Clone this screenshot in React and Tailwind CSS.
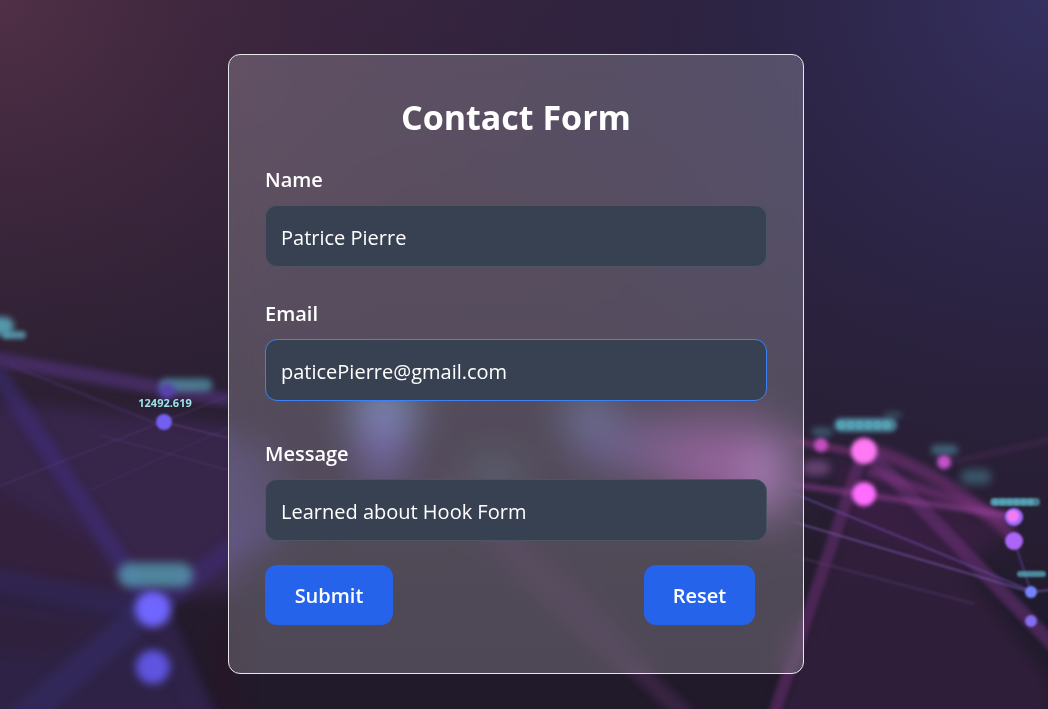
import { useState } from "react";

const beams = [
  { d: "M-10 358 L230 400", stroke: "#4c3070", width: 14, opacity: 0.75, blur: "url(#soft3)" },
  { d: "M-5 370 L150 605", stroke: "#41308a", width: 18, opacity: 0.45, blur: "url(#soft4)" },
  { d: "M-10 580 L150 608", stroke: "#33295e", width: 24, opacity: 0.6, blur: "url(#soft4)" },
  { d: "M150 608 L20 720", stroke: "#352c66", width: 28, opacity: 0.6, blur: "url(#soft4)" },
  { d: "M150 612 L275 515", stroke: "#43308a", width: 20, opacity: 0.4, blur: "url(#soft4)" },
  { d: "M158 615 L205 720", stroke: "#342552", width: 26, opacity: 0.7, blur: "url(#soft4)" },
  { d: "M10 365 L160 425", stroke: "#553377", width: 4, opacity: 0.3, blur: "url(#soft1)" },
  { d: "M-5 488 L228 396", stroke: "#6b4588", width: 1, opacity: 0.5, blur: "url(#soft1)" },
  { d: "M90 490 L228 428", stroke: "#5d3d7c", width: 1, opacity: 0.5, blur: "url(#soft1)" },
  { d: "M100 435 L228 470", stroke: "#67457e", width: 1, opacity: 0.5, blur: "url(#soft1)" },
  { d: "M164 422 L228 438", stroke: "#76508a", width: 1, opacity: 0.7, blur: "url(#soft1)" },
  { d: "M862 455 L772 720", stroke: "#683072", width: 12, opacity: 0.55, blur: "url(#soft2)" },
  { d: "M872 456 L1058 650", stroke: "#6c3278", width: 14, opacity: 0.55, blur: "url(#soft2)" },
  { d: "M868 449 Q940 470 1012 535", stroke: "#7e347f", width: 13, opacity: 0.55, blur: "url(#soft3)" },
  { d: "M868 470 L1010 520", stroke: "#8b388d", width: 10, opacity: 0.5, blur: "url(#soft3)" },
  { d: "M790 440 L864 454", stroke: "#823579", width: 8, opacity: 0.55, blur: "url(#soft2)" },
  { d: "M790 484 L1014 516", stroke: "#9b429e", width: 6, opacity: 0.5, blur: "url(#soft2)" },
  { d: "M790 492 L920 545 L1031 591", stroke: "#6d4aa5", width: 2, opacity: 0.6, blur: "url(#soft1)" },
  { d: "M790 521 L1031 592 L1058 589", stroke: "#7656a6", width: 2, opacity: 0.65, blur: "url(#soft1)" },
  { d: "M1014 540 L1031 592", stroke: "#5649a0", width: 2, opacity: 0.6, blur: "url(#soft1)" },
  { d: "M790 555 L975 604", stroke: "#593b70", width: 3, opacity: 0.35, blur: "url(#soft1)" },
  { d: "M940 465 L1058 438", stroke: "#603163", width: 7, opacity: 0.25, blur: "url(#soft2)" },
  { d: "M440 480 L690 720", stroke: "#55305f", width: 17, opacity: 0.45, blur: "url(#soft4)" },
];

const nodes = [
  { x: 164, y: 422, r: 8, fill: "#735ff2", blur: "url(#soft1)" },
  { x: 167, y: 391, r: 8, fill: "#5841af", blur: "url(#soft3)" },
  { x: 153, y: 609, r: 18, fill: "#7066ff", blur: "url(#soft4)" },
  { x: 153, y: 667, r: 17, fill: "#5f54e0", blur: "url(#soft4)" },
  { x: 864, y: 451, r: 13, fill: "#ff78f4", blur: "url(#soft2)" },
  { x: 864, y: 494, r: 12, fill: "#ff6cff", blur: "url(#soft2)" },
  { x: 821, y: 445, r: 7, fill: "#c44fc0", blur: "url(#soft2)" },
  { x: 944, y: 462, r: 7, fill: "#c452ca", blur: "url(#soft2)" },
  { x: 1014, y: 517, r: 9, fill: "#a06bff", blur: "url(#soft1)" },
  { x: 1013, y: 516, r: 6, fill: "#f57bf5", blur: "url(#soft1)" },
  { x: 1014, y: 541, r: 9, fill: "#ad65f8", blur: "url(#soft1)" },
  { x: 1031, y: 592, r: 6, fill: "#7584ff", blur: "url(#soft1)" },
  { x: 1031, y: 621, r: 6, fill: "#846df0", blur: "url(#soft1)" },
];

const tags = [
  { d: "M-4 326 H5", width: 18, opacity: 0.9, blur: "url(#soft3)" },
  { d: "M6 335 H22", width: 8, opacity: 0.8, blur: "url(#soft2)" },
  { d: "M166 385 H206", width: 13, opacity: 0.65, blur: "url(#soft3)" },
  { d: "M130 575 H181", width: 24, opacity: 0.75, blur: "url(#soft5)" },
  { d: "M841 425 H890", width: 14, opacity: 0.75, blur: "url(#soft2)" },
  { d: "M841 425 h1 m8 0 h1 m8 0 h1 m8 0 h1 m8 0 h1 m8 0 h1", width: 8, opacity: 0.8, blur: "url(#soft1)" },
  { d: "M887 415 H899", width: 6, opacity: 0.35, blur: "url(#soft3)" },
  { d: "M816 432 H828", width: 9, opacity: 0.4, blur: "url(#soft3)" },
  { d: "M936 450 H953", width: 10, opacity: 0.5, blur: "url(#soft3)" },
  { d: "M968 477 H984", width: 15, opacity: 0.4, blur: "url(#soft4)" },
  { d: "M994 502 H1036", width: 8, opacity: 0.7, blur: "url(#soft1)" },
  { d: "M995 502 h1 m6 0 h1 m6 0 h1 m6 0 h1 m6 0 h1 m6 0 h1", width: 6, opacity: 0.9, blur: "url(#soft1)" },
  { d: "M1020 574 H1043", width: 6, opacity: 0.8, blur: "url(#soft1)" },
];

const glows = [
  { x: 384, y: 410, rx: 34, ry: 30, fill: "#6f98c8", opacity: 0.65 },
  { x: 382, y: 445, rx: 24, ry: 42, fill: "#6a55c0", opacity: 0.6 },
  { x: 590, y: 415, rx: 28, ry: 26, fill: "#5a70a8", opacity: 0.55 },
  { x: 632, y: 446, rx: 60, ry: 26, fill: "#54458a", opacity: 0.65 },
  { x: 495, y: 476, rx: 28, ry: 18, fill: "#446078", opacity: 0.5 },
  { x: 710, y: 452, rx: 88, ry: 44, fill: "#6a3a74", opacity: 0.6 },
  { x: 722, y: 468, rx: 50, ry: 32, fill: "#96449a", opacity: 0.6 },
  { x: 766, y: 480, rx: 24, ry: 44, fill: "#a46cb8", opacity: 0.65 },
  { x: 245, y: 500, rx: 40, ry: 60, fill: "#463a78", opacity: 0.5 },
];

function NetworkBackdrop() {
  return (
    <svg
      aria-hidden="true"
      className="absolute inset-0 h-full w-full"
      viewBox="0 0 1048 709"
      preserveAspectRatio="xMidYMid slice"
      colorInterpolationFilters="sRGB"
    >
      <defs>
        <linearGradient id="base" x1="0" y1="0" x2="0" y2="1">
          <stop offset="0" stopColor="#36243f" />
          <stop offset="0.5" stopColor="#2b2034" />
          <stop offset="1" stopColor="#211a2a" />
        </linearGradient>
        <radialGradient id="rose" gradientUnits="userSpaceOnUse" cx="0" cy="0" r="460">
          <stop offset="0" stopColor="#503046" />
          <stop offset="1" stopColor="#3a2336" stopOpacity="0" />
        </radialGradient>
        <radialGradient id="indigo" gradientUnits="userSpaceOnUse" cx="1048" cy="0" r="620">
          <stop offset="0" stopColor="#343060" />
          <stop offset="0.5" stopColor="#2a2445" stopOpacity="0.8" />
          <stop offset="1" stopColor="#26203a" stopOpacity="0" />
        </radialGradient>
        <filter id="soft1" filterUnits="userSpaceOnUse" x="-50" y="-50" width="1150" height="810"><feGaussianBlur stdDeviation="1" /></filter>
        <filter id="soft2" filterUnits="userSpaceOnUse" x="-50" y="-50" width="1150" height="810"><feGaussianBlur stdDeviation="2" /></filter>
        <filter id="soft3" filterUnits="userSpaceOnUse" x="-50" y="-50" width="1150" height="810"><feGaussianBlur stdDeviation="3" /></filter>
        <filter id="soft4" filterUnits="userSpaceOnUse" x="-50" y="-50" width="1150" height="810"><feGaussianBlur stdDeviation="4" /></filter>
        <filter id="soft5" filterUnits="userSpaceOnUse" x="-50" y="-50" width="1150" height="810"><feGaussianBlur stdDeviation="5" /></filter>
        <filter id="haze" filterUnits="userSpaceOnUse" x="-50" y="-50" width="1150" height="810"><feGaussianBlur stdDeviation="8" /></filter>
        <filter id="glow" filterUnits="userSpaceOnUse" x="-50" y="-50" width="1150" height="810"><feGaussianBlur stdDeviation="16" /></filter>
      </defs>
      <rect width="1048" height="709" fill="url(#base)" />
      <rect width="1048" height="709" fill="url(#rose)" />
      <rect width="1048" height="709" fill="url(#indigo)" />
      <g filter="url(#haze)">
        <path d="M-20 400 L240 425 V590 L150 600 L-20 580 Z" fill="#38264c" opacity="0.95" />
        <path d="M-20 480 L90 540 L130 600 L-20 575 Z" fill="#33213c" opacity="0.8" />
        <path d="M-20 590 L140 605 L215 740 H-20 Z" fill="#2e2346" />
        <path d="M-20 605 L110 622 L50 660 L-20 650 Z" fill="#30203a" opacity="0.7" />
        <path d="M850 490 L960 570 L1048 680 V740 H770 Z" fill="#301f3b" opacity="0.95" />
        <path d="M830 455 L1010 530 L960 570 L850 520 Z" fill="#46204e" opacity="0.5" />
        <path d="M970 560 L1070 600 V690 Z" fill="#1e1b2e" opacity="0.8" />
        <path d="M205 640 L240 600 V740 H225 Z" fill="#271727" opacity="0.8" />
      </g>
      {beams.map((b) => (
        <path key={b.d} d={b.d} fill="none" stroke={b.stroke} strokeWidth={b.width} opacity={b.opacity} filter={b.blur} />
      ))}
      <svg x="229" y="55" width="574" height="618" viewBox="229 55 574 618">
        <g filter="url(#glow)">
          {glows.map((g) => (
            <ellipse key={g.x} cx={g.x} cy={g.y} rx={g.rx} ry={g.ry} fill={g.fill} opacity={g.opacity} />
          ))}
        </g>
      </svg>
      <ellipse cx="816" cy="468" rx="15" ry="8" fill="#8f5c9c" opacity="0.6" filter="url(#soft4)" />
      {tags.map((t) => (
        <path key={t.d} d={t.d} fill="none" stroke="#58a5b8" strokeWidth={t.width} strokeLinecap="round" opacity={t.opacity} filter={t.blur} />
      ))}
      {nodes.map((n) => (
        <circle key={`${n.x}-${n.y}`} cx={n.x} cy={n.y} r={n.r} fill={n.fill} filter={n.blur} />
      ))}
      <text x="165" y="407" textAnchor="middle" fill="#9fe4ea" fontSize="11" fontWeight="700" fontFamily="'Open Sans', sans-serif">
        12492.619
      </text>
    </svg>
  );
}

function Field({ id, label, type = "text", value, onChange, active, className }) {
  return (
    <div className={className}>
      <label htmlFor={id} className="mb-2 block text-[20px] leading-[34px] font-semibold">
        {label}
      </label>
      <input
        id={id}
        name={id}
        type={type}
        value={value}
        onChange={(e) => onChange(id, e.target.value)}
        className={`block h-[62px] w-full rounded-xl border bg-[#374151] px-[15px] pt-[2px] text-[20px] text-white outline-none focus:border-[#3b82f6] ${
          active ? "border-[#3b82f6]" : "border-[#4b5563]"
        }`}
      />
    </div>
  );
}

const empty = { name: "", email: "", message: "" };

export default function App() {
  const [values, setValues] = useState({
    name: "Patrice Pierre",
    email: "paticePierre@gmail.com",
    message: "Learned about Hook Form",
  });
  const update = (key, value) => setValues((v) => ({ ...v, [key]: value }));

  return (
    <main className="relative flex min-h-screen items-start justify-center overflow-hidden bg-[#2a1f32] pt-[54px] pr-4 pb-[35px] font-['Open_Sans','Noto_Sans',sans-serif] text-white">
      <NetworkBackdrop />
      <form
        onSubmit={(e) => e.preventDefault()}
        className="relative w-full max-w-xl rounded-xl border border-gray-200 bg-white/20 px-9 pt-9 pb-12 backdrop-blur-md"
      >
        <h1 className="mb-5 text-center text-[34px] leading-[52px] font-bold">Contact Form</h1>
        <Field id="name" label="Name" value={values.name} onChange={update} className="mb-[30px]" />
        <Field id="email" label="Email" type="email" value={values.email} onChange={update} active className="mb-9" />
        <Field id="message" label="Message" value={values.message} onChange={update} className="mb-6" />
        <div className="flex justify-between pr-3">
          <button type="submit" className="h-[60px] w-32 rounded-xl bg-[#2563eb] pt-[2px] text-[20px] font-semibold">
            Submit
          </button>
          <button
            type="button"
            onClick={() => setValues(empty)}
            className="h-[60px] w-[111px] rounded-xl bg-[#2563eb] pt-[2px] text-[20px] font-semibold"
          >
            Reset
          </button>
        </div>
      </form>
    </main>
  );
}
